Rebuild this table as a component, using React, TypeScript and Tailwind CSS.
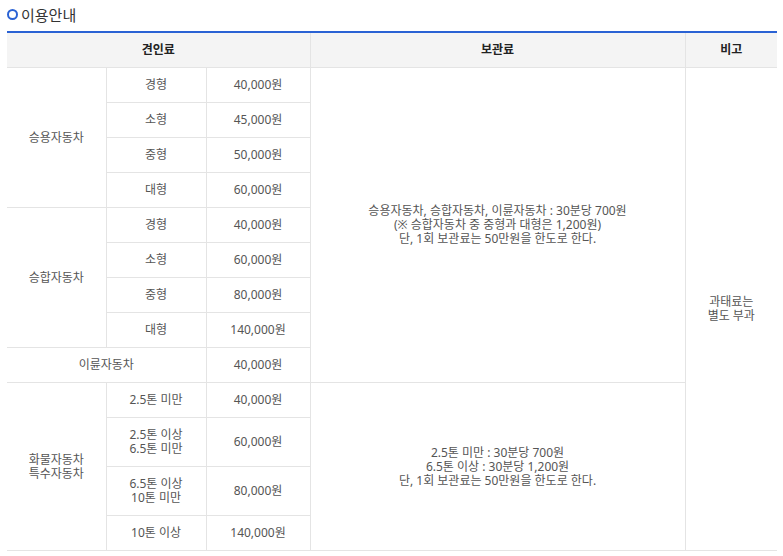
const font = { fontFamily: '"Noto Sans", "Noto Sans CJK KR", sans-serif' };

interface FeeRow {
  size: string;
  fee: string;
}

const passenger: FeeRow[] = [
  { size: "경형", fee: "40,000원" },
  { size: "소형", fee: "45,000원" },
  { size: "중형", fee: "50,000원" },
  { size: "대형", fee: "60,000원" },
];

const van: FeeRow[] = [
  { size: "경형", fee: "40,000원" },
  { size: "소형", fee: "60,000원" },
  { size: "중형", fee: "80,000원" },
  { size: "대형", fee: "140,000원" },
];

const truck: FeeRow[] = [
  { size: "2.5톤 미만", fee: "40,000원" },
  { size: "2.5톤 이상\n6.5톤 미만", fee: "60,000원" },
  { size: "6.5톤 이상\n10톤 미만", fee: "80,000원" },
  { size: "10톤 이상", fee: "140,000원" },
];

const td = "border border-[#e4e4e4] px-2 py-[10px] text-center align-middle leading-[14px] whitespace-pre-line";
const tdFirst = "border-y border-r border-[#e4e4e4] px-2 py-[10px] text-center align-middle leading-[14px] whitespace-pre-line";
const tdLast = "border-y border-l border-[#e4e4e4] px-2 py-[10px] text-center align-middle leading-[14px]";

export default function App() {
  return (
    <div className="bg-white w-[783px] h-[556px] overflow-hidden text-[12px] text-[#555]" style={font}>
      {/* Title */}
      <div className="flex items-start gap-[3px] pl-[7px] pt-[5px] h-[31px]">
        <span className="mt-[4px] w-[11px] h-[11px] rounded-full border-[2.5px] border-[#2a62d4]" />
        <h2 className="text-[15px] leading-[20px] text-[#333]">이용안내</h2>
      </div>

      <table className="ml-[7px] w-[770px] table-fixed border-collapse border-t-2 border-t-[#2a62d4]">
        <colgroup>
          <col className="w-[99px]" />
          <col className="w-[100px]" />
          <col className="w-[104px]" />
          <col className="w-[375px]" />
          <col className="w-[92px]" />
        </colgroup>
        <thead>
          <tr className="bg-[#f4f4f4] text-[#222] font-bold">
            <th colSpan={3} className="border-b border-r border-[#e4e4e4] py-[10px] leading-[14px]">견인료</th>
            <th className="border-b border-x border-[#e4e4e4] py-[10px] leading-[14px]">보관료</th>
            <th className="border-b border-l border-[#e4e4e4] py-[10px] leading-[14px]">비고</th>
          </tr>
        </thead>
        <tbody>
          {passenger.map((r, i) => (
            <tr key={"p" + i}>
              {i === 0 && (
                <td rowSpan={4} className={tdFirst}>승용자동차</td>
              )}
              <td className={td}>{r.size}</td>
              <td className={td}>{r.fee}</td>
              {i === 0 && (
                <td rowSpan={9} className={td}>
                  승용자동차, 승합자동차, 이륜자동차 : 30분당 700원
                  <br />(※ 승합자동차 중 중형과 대형은 1,200원)
                  <br />단, 1회 보관료는 50만원을 한도로 한다.
                </td>
              )}
              {i === 0 && (
                <td rowSpan={13} className={tdLast}>
                  과태료는
                  <br />별도 부과
                </td>
              )}
            </tr>
          ))}
          {van.map((r, i) => (
            <tr key={"v" + i}>
              {i === 0 && (
                <td rowSpan={4} className={tdFirst}>승합자동차</td>
              )}
              <td className={td}>{r.size}</td>
              <td className={td}>{r.fee}</td>
            </tr>
          ))}
          <tr>
            <td colSpan={2} className={tdFirst}>이륜자동차</td>
            <td className={td}>40,000원</td>
          </tr>
          {truck.map((r, i) => (
            <tr key={"t" + i}>
              {i === 0 && (
                <td rowSpan={4} className={tdFirst}>
                  화물자동차
                  <br />특수자동차
                </td>
              )}
              <td className={td}>{r.size}</td>
              <td className={td}>{r.fee}</td>
              {i === 0 && (
                <td rowSpan={4} className={td}>
                  2.5톤 미만 : 30분당 700원
                  <br />6.5톤 이상 : 30분당 1,200원
                  <br />단, 1회 보관료는 50만원을 한도로 한다.
                </td>
              )}
            </tr>
          ))}
        </tbody>
      </table>
    </div>
  );
}
